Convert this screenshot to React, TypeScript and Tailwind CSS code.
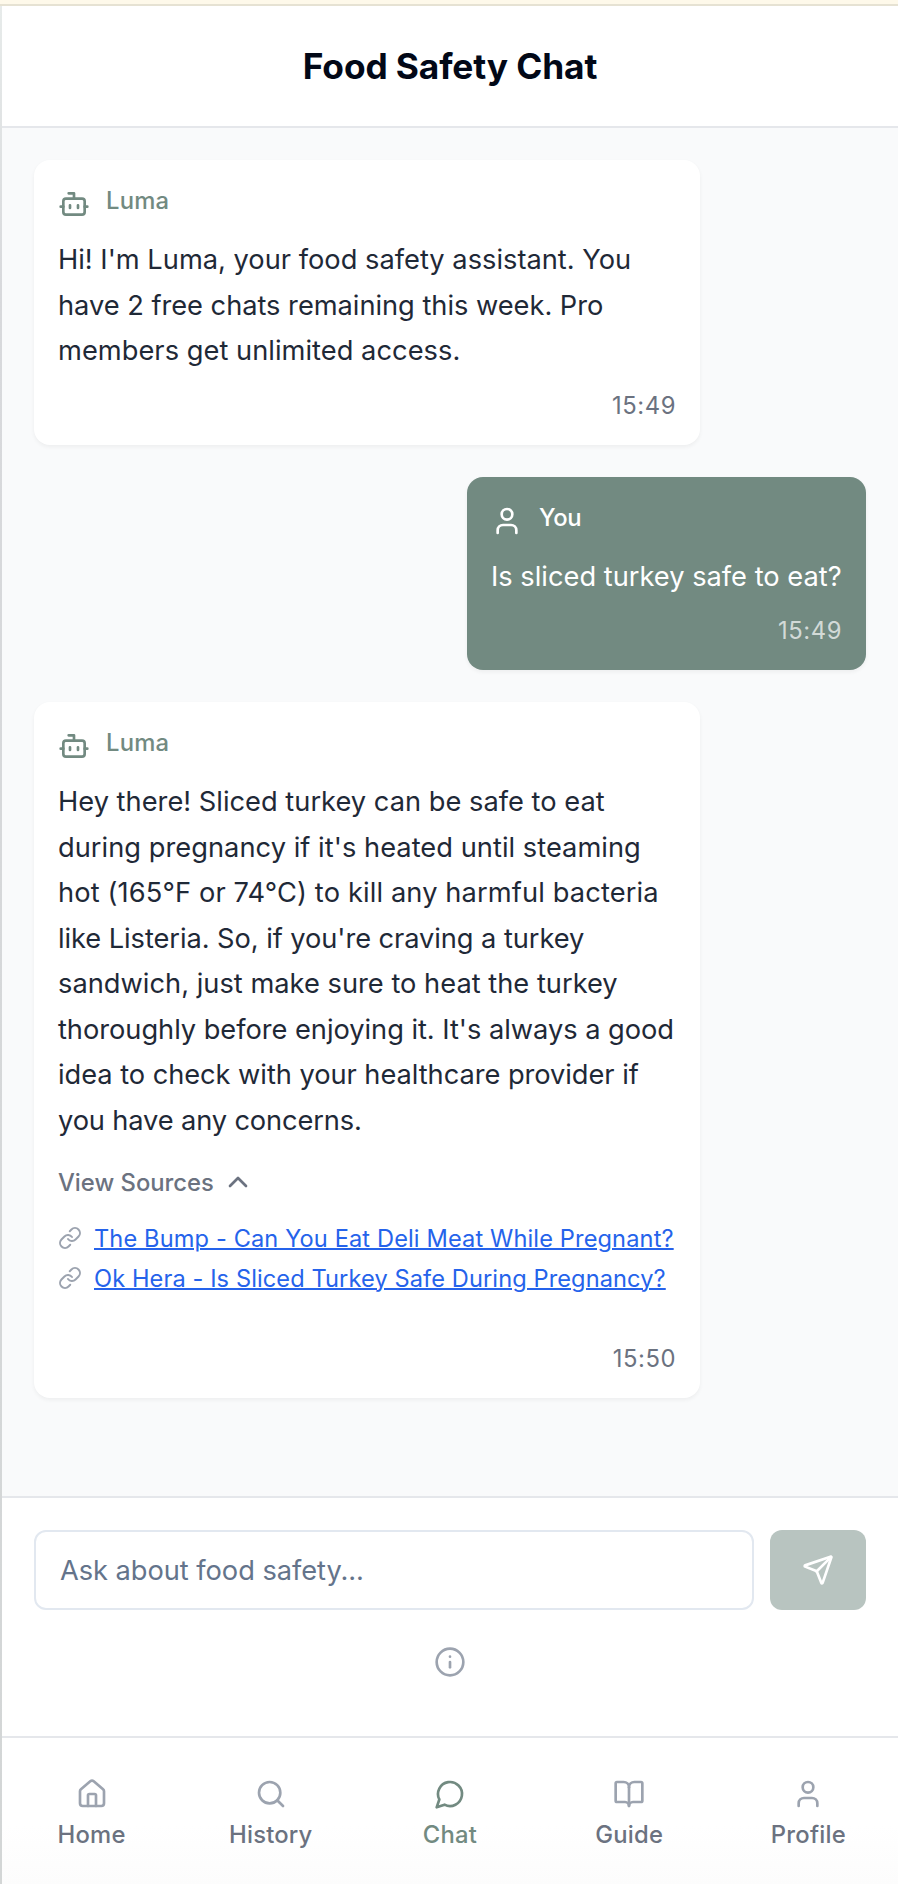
import React from "react";
import { BookOpen, ChevronUp, House, Info, Link, Search, Send, User } from "lucide-react";

function BotIcon({ className }: { className?: string }) {
  return (
    <svg viewBox="0 0 24 24" fill="none" stroke="currentColor" strokeWidth="2" strokeLinecap="round" strokeLinejoin="round" className={className}>
      <path d="M12 8V4H8" />
      <rect width="16" height="12" x="4" y="8" rx="2" />
      <path d="M2 14h2M20 14h2M15 13v2M9 13v2" />
    </svg>
  );
}

function ChatIcon({ className }: { className?: string }) {
  return (
    <svg viewBox="0 0 24 24" fill="none" stroke="currentColor" strokeWidth="2" strokeLinecap="round" strokeLinejoin="round" className={className}>
      <path d="M7.9 20A9 9 0 1 0 4 16.1L2 22Z" />
    </svg>
  );
}

type Line = { text: string; tracking: string };

const greeting: Line[] = [
  { text: "Hi! I'm Luma, your food safety assistant. You", tracking: "tracking-[0px]" },
  { text: "have 2 free chats remaining this week. Pro", tracking: "tracking-[-0.03px]" },
  { text: "members get unlimited access.", tracking: "tracking-[0.03px]" },
];

const answer: Line[] = [
  { text: "Hey there! Sliced turkey can be safe to eat", tracking: "tracking-[0.01px]" },
  { text: "during pregnancy if it's heated until steaming", tracking: "tracking-[0.03px]" },
  { text: "hot (165°F or 74°C) to kill any harmful bacteria", tracking: "tracking-[0.12px]" },
  { text: "like Listeria. So, if you're craving a turkey", tracking: "tracking-[-0.07px]" },
  { text: "sandwich, just make sure to heat the turkey", tracking: "tracking-[0.01px]" },
  { text: "thoroughly before enjoying it. It's always a good", tracking: "tracking-[-0.04px]" },
  { text: "idea to check with your healthcare provider if", tracking: "tracking-[-0.05px]" },
  { text: "you have any concerns.", tracking: "tracking-[-0.14px]" },
];

const sources = [
  { text: "The Bump - Can You Eat Deli Meat While Pregnant?", tracking: "tracking-[0.13px]" },
  { text: "Ok Hera - Is Sliced Turkey Safe During Pregnancy?", tracking: "tracking-[0.1px]" },
];

function Body({ lines }: { lines: Line[] }) {
  return (
    <p className="mt-[17px] -mb-px text-[27.25px] leading-[45.5px]">
      {lines.map((line) => (
        <span key={line.text} className={`block whitespace-nowrap ${line.tracking}`}>
          {line.text}
        </span>
      ))}
    </p>
  );
}

function LumaHeader() {
  return (
    <div className="flex h-9 gap-4 text-[#728a81]">
      <BotIcon className="mt-1 size-8" />
      <span className="pt-px text-[23.8px] leading-8 font-medium tracking-[0.2px]">Luma</span>
    </div>
  );
}

function Time({ value, className }: { value: string; className: string }) {
  return (
    <div className={`h-8 pt-px text-right text-[23.8px] leading-8 tracking-[0.55px] ${className}`}>
      {value}
    </div>
  );
}

const tabs = [
  { label: "Home", icon: House, tracking: "tracking-[0.25px]", active: false },
  { label: "History", icon: Search, tracking: "tracking-[0.2px]", active: false },
  { label: "Chat", icon: ChatIcon, tracking: "tracking-[0.25px]", active: true },
  { label: "Guide", icon: BookOpen, tracking: "tracking-[0.25px]", active: false },
  { label: "Profile", icon: User, tracking: "tracking-[0.25px]", active: false },
];

export default function App() {
  return (
    <div className="flex h-[1884px] w-[898px] flex-col overflow-hidden bg-white font-['Inter',sans-serif]">
      <div className="h-1.5 shrink-0 border-b-2 border-[#e6e2d3] bg-[#fef9ea]" />
      <div className="flex min-h-0 flex-1">
        <div className="w-0.5 shrink-0 bg-linear-to-b from-[#e7ebea] via-[#d8d9dc] via-15% to-[#d3d6d6]" />
        <div className="flex min-w-0 flex-1 flex-col">
          <header className="flex h-[122px] shrink-0 items-center justify-center border-b-2 border-[#e5e7eb] pt-0.5">
            <h1 className="text-[35.3px] leading-[56px] font-bold tracking-[-0.12px] text-[#020817]">Food Safety Chat</h1>
          </header>

          <main className="flex h-[1368px] shrink-0 flex-col gap-8 bg-[#f9fafb] p-8">
            <article className="w-[666px] rounded-2xl bg-white p-6 text-[#1f2937] shadow-[0_2px_4px_rgba(0,0,0,0.05)]">
              <LumaHeader />
              <Body lines={greeting} />
              <Time value="15:49" className="mt-4 text-[#6b7280]" />
            </article>

            <article className="w-[399px] self-end rounded-2xl bg-[#728a81] p-6 text-white shadow-[0_2px_4px_rgba(0,0,0,0.05)]">
              <div className="flex h-9 gap-4">
                <User className="mt-1 size-8" />
                <span className="pt-px text-[23.8px] leading-8 font-medium tracking-[-0.3px]">You</span>
              </div>
              <Body lines={[{ text: "Is sliced turkey safe to eat?", tracking: "tracking-[0px]" }]} />
              <Time value="15:49" className="mt-4 text-white/70" />
            </article>

            <article className="w-[666px] rounded-2xl bg-white p-6 text-[#1f2937] shadow-[0_2px_4px_rgba(0,0,0,0.05)]">
              <LumaHeader />
              <Body lines={answer} />
              <button className="mt-6 flex h-8 items-center gap-2 text-[23.8px] leading-8 font-medium text-[#6b7280]">
                <span className="pt-0.5">View Sources</span>
                <ChevronUp className="size-8" />
              </button>
              <ul className="mt-6 flex flex-col gap-2">
                {sources.map((source) => (
                  <li key={source.text} className="flex h-8 items-center gap-3">
                    <Link className="size-6 shrink-0 text-[#9ca3af]" />
                    <a className={`pt-0.5 text-[23.6px] leading-8 whitespace-nowrap text-[#2563eb] underline decoration-2 ${source.tracking}`}>
                      {source.text}
                    </a>
                  </li>
                ))}
              </ul>
              <Time value="15:50" className="mt-12 text-[#6b7280]" />
            </article>
          </main>

          <section className="flex h-60 shrink-0 flex-col items-center gap-9 border-t-2 border-[#e5e7eb] px-8 pt-8">
            <div className="flex w-full gap-4">
              <div className="flex h-20 flex-1 items-center rounded-xl border-2 border-[#e2e8f0] px-6 pt-0.5 text-[27.25px] tracking-[-0.05px] text-[#64748b]">
                Ask about food safety...
              </div>
              <button className="flex h-20 w-24 items-center justify-center rounded-xl bg-[#b8c4c0] text-white">
                <Send className="size-8" />
              </button>
            </div>
            <Info className="size-8 text-[#9ca3af]" />
          </section>

          <nav className="grid flex-1 grid-cols-5 border-t-2 border-[#e5e7eb] bg-linear-to-b from-white from-60% to-[#fcfcfc] pt-10">
            {tabs.map(({ label, icon: Icon, tracking, active }) => (
              <div key={label} className={`flex flex-col items-center gap-[9px] ${active ? "text-[#728a81]" : "text-[#6b7280]"}`}>
                <Icon className={active ? "size-8" : "size-8 text-[#9ca3af]"} />
                <span className={`text-[23.8px] leading-8 font-medium ${tracking}`}>{label}</span>
              </div>
            ))}
          </nav>
        </div>
      </div>
    </div>
  );
}
